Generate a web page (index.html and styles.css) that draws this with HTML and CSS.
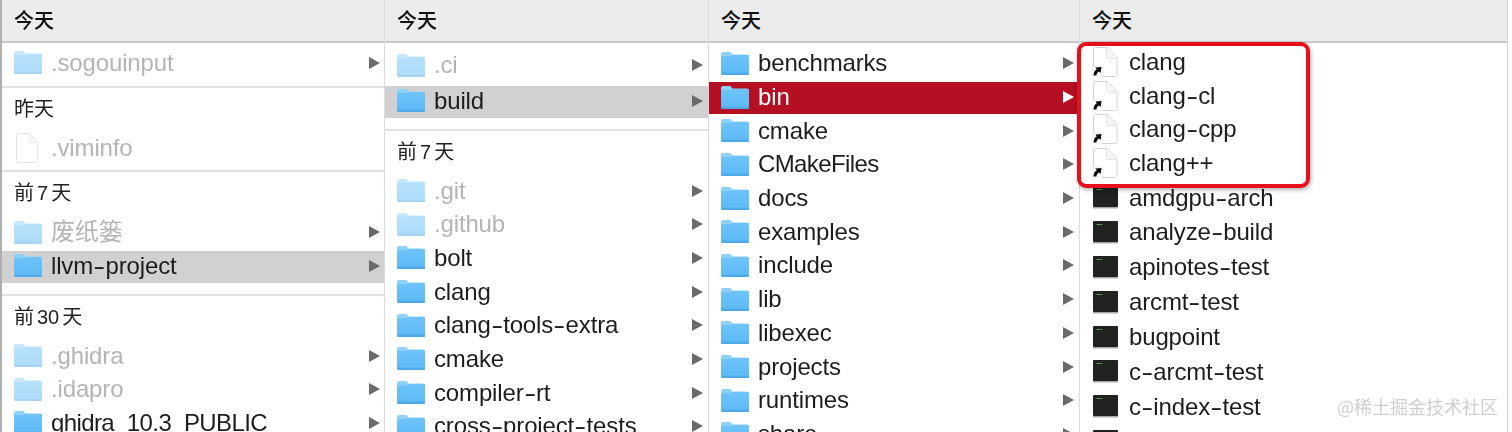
FILE: index.html
```html
<!DOCTYPE html>
<html lang="zh">
<head>
<meta charset="utf-8">
<title>Finder</title>
<link rel="stylesheet" href="styles.css">
</head>
<body>
<svg class="defs" width="0" height="0" aria-hidden="true">
  <defs>
    <linearGradient id="fg" x1="0" y1="0" x2="0" y2="1">
      <stop offset="0" stop-color="#6fc4f9"/>
      <stop offset="1" stop-color="#5cb9f7"/>
    </linearGradient>
    <symbol id="folder" viewBox="0 0 28 23">
      <path d="M0 2.200C0 1 .8 0 2 0h6.500c1 0 1.400.4 2 1.200l.8 1.300h14.500c1.200 0 2.200 1 2.200 2.200V8H0z" fill="#8ed2f9"/>
      <path d="M0 5.600c0-.9.6-1.600 1.500-1.600h7.800c.8 0 1.200-.3 1.700-.8l.3-.2h15c1.500 0 2.700.6 2.700 2v16c0 1.200-.9 2-2 2H2c-1.100 0-2-.8-2-2z" fill="url(#fg)"/>
      <path d="M0 21.200c0 1 .9 1.800 2 1.800h24c1.100 0 2-.8 2-1.800v-.4H0z" fill="#4fa9e6"/>
    </symbol>
    <symbol id="file" viewBox="0 0 24 30">
      <path d="M3 .5h10.500c1 0 1.700.4 2.400 1.100l5.500 5.900c.7.7 1.100 1.500 1.100 2.500V28c0 .8-.6 1.500-1.500 1.500H3c-.8 0-1.500-.7-1.500-1.500V2C1.500 1.200 2.200 .5 3 .5z" fill="#fff" stroke="#d8d8d8"/>
      <path d="M14 1v6.500c0 1.200.8 2 2 2h6.500" fill="#f6f6f6" stroke="#e4e4e4"/>
    </symbol>
    <symbol id="link" viewBox="0 0 26 30">
      <path d="M3 .5h11c1 0 1.700.4 2.400 1.100l7.500 8c.7.7 1.100 1.500 1.100 2.500V28c0 .8-.6 1.500-1.500 1.500H3c-.8 0-1.500-.7-1.500-1.500V2C1.500 1.200 2.200 .5 3 .5z" fill="#fff" stroke="#d2d2d2"/>
      <path d="M14.500 1v8.500c0 1.200.8 2 2 2h8" fill="#f6f6f6" stroke="#e2e2e2"/>
      <rect x="0" y="19" width="11" height="11" rx="1.500" fill="#fff" stroke="#dcdcdc" stroke-width=".6"/>
      <path d="M1.500 28.500c.1-3.200 1.300-5 3.300-6.200l-1.500-1.800 6.200-.5-.9 6.100-1.700-1.700c-1.400.9-2.200 2.200-2.500 4.100z" fill="#0b0b0b"/>
    </symbol>
    <symbol id="exec" viewBox="0 0 27 23">
      <rect x="1" y="0" width="25" height="21" rx="1" fill="#1f221f"/>
      <path d="M1 21h25v1.500H1z" fill="#a8a8a8"/>
      <path d="M4.500 3.500h6" stroke="#5fdc5f" stroke-width="1.200" stroke-dasharray="1 .5"/>
    </symbol>
  </defs>
</svg>

<main class="browser">
  <section class="col col-a">
    <header class="head">今天</header>
    <div class="group">
      <div class="row dim"><svg class="ico"><use href="#folder"/></svg><span class="name">.sogouinput</span><i class="arrow"></i></div>
    </div>
    <div class="group">
      <h2 class="label">昨天</h2>
      <div class="row dim"><svg class="ico doc"><use href="#file"/></svg><span class="name">.viminfo</span></div>
    </div>
    <div class="group wide">
      <h2 class="label">前<span class="num">7</span>天</h2>
      <div class="row dim"><svg class="ico"><use href="#folder"/></svg><span class="name">废纸篓</span><i class="arrow"></i></div>
      <div class="row sel"><svg class="ico"><use href="#folder"/></svg><span class="name">llvm<b class="hy">-</b>project</span><i class="arrow"></i></div>
    </div>
    <div class="group">
      <h2 class="label">前<span class="num">30</span>天</h2>
      <div class="row dim"><svg class="ico"><use href="#folder"/></svg><span class="name">.ghidra</span><i class="arrow"></i></div>
      <div class="row dim"><svg class="ico"><use href="#folder"/></svg><span class="name">.idapro</span><i class="arrow"></i></div>
      <div class="row"><svg class="ico"><use href="#folder"/></svg><span class="name tight">ghidra_10.3_PUBLIC</span><i class="arrow"></i></div>
    </div>
  </section>

  <section class="col col-b">
    <header class="head">今天</header>
    <div class="group wide">
      <div class="row dim lead"><svg class="ico"><use href="#folder"/></svg><span class="name">.ci</span><i class="arrow"></i></div>
      <div class="row sel"><svg class="ico"><use href="#folder"/></svg><span class="name">build</span><i class="arrow"></i></div>
    </div>
    <div class="group">
      <h2 class="label">前<span class="num">7</span>天</h2>
      <div class="row dim"><svg class="ico"><use href="#folder"/></svg><span class="name">.git</span><i class="arrow"></i></div>
      <div class="row dim"><svg class="ico"><use href="#folder"/></svg><span class="name">.github</span><i class="arrow"></i></div>
      <div class="row"><svg class="ico"><use href="#folder"/></svg><span class="name">bolt</span><i class="arrow"></i></div>
      <div class="row"><svg class="ico"><use href="#folder"/></svg><span class="name">clang</span><i class="arrow"></i></div>
      <div class="row"><svg class="ico"><use href="#folder"/></svg><span class="name">clang<b class="hy">-</b>tools<b class="hy">-</b>extra</span><i class="arrow"></i></div>
      <div class="row"><svg class="ico"><use href="#folder"/></svg><span class="name">cmake</span><i class="arrow"></i></div>
      <div class="row"><svg class="ico"><use href="#folder"/></svg><span class="name">compiler<b class="hy">-</b>rt</span><i class="arrow"></i></div>
      <div class="row"><svg class="ico"><use href="#folder"/></svg><span class="name">cross<b class="hy">-</b>project<b class="hy">-</b>tests</span><i class="arrow"></i></div>
    </div>
  </section>

  <section class="col col-c">
    <header class="head">今天</header>
    <div class="group">
      <div class="row"><svg class="ico"><use href="#folder"/></svg><span class="name">benchmarks</span><i class="arrow"></i></div>
      <div class="row active"><svg class="ico"><use href="#folder"/></svg><span class="name">bin</span><i class="arrow"></i></div>
      <div class="row"><svg class="ico"><use href="#folder"/></svg><span class="name">cmake</span><i class="arrow"></i></div>
      <div class="row"><svg class="ico"><use href="#folder"/></svg><span class="name tight">CMakeFiles</span><i class="arrow"></i></div>
      <div class="row"><svg class="ico"><use href="#folder"/></svg><span class="name">docs</span><i class="arrow"></i></div>
      <div class="row"><svg class="ico"><use href="#folder"/></svg><span class="name">examples</span><i class="arrow"></i></div>
      <div class="row"><svg class="ico"><use href="#folder"/></svg><span class="name">include</span><i class="arrow"></i></div>
      <div class="row"><svg class="ico"><use href="#folder"/></svg><span class="name">lib</span><i class="arrow"></i></div>
      <div class="row"><svg class="ico"><use href="#folder"/></svg><span class="name">libexec</span><i class="arrow"></i></div>
      <div class="row"><svg class="ico"><use href="#folder"/></svg><span class="name">projects</span><i class="arrow"></i></div>
      <div class="row"><svg class="ico"><use href="#folder"/></svg><span class="name">runtimes</span><i class="arrow"></i></div>
      <div class="row"><svg class="ico"><use href="#folder"/></svg><span class="name">share</span><i class="arrow"></i></div>
    </div>
  </section>

  <section class="col col-d">
    <header class="head">今天</header>
    <div class="group">
      <div class="row"><svg class="ico"><use href="#link"/></svg><span class="name">clang</span></div>
      <div class="row"><svg class="ico"><use href="#link"/></svg><span class="name">clang<b class="hy">-</b>cl</span></div>
      <div class="row"><svg class="ico"><use href="#link"/></svg><span class="name">clang<b class="hy">-</b>cpp</span></div>
      <div class="row before-tools"><svg class="ico"><use href="#link"/></svg><span class="name">clang++</span></div>
      <div class="row tool"><svg class="ico"><use href="#exec"/></svg><span class="name">amdgpu<b class="hy">-</b>arch</span></div>
      <div class="row tool"><svg class="ico"><use href="#exec"/></svg><span class="name">analyze<b class="hy">-</b>build</span></div>
      <div class="row tool"><svg class="ico"><use href="#exec"/></svg><span class="name">apinotes<b class="hy">-</b>test</span></div>
      <div class="row tool"><svg class="ico"><use href="#exec"/></svg><span class="name">arcmt<b class="hy">-</b>test</span></div>
      <div class="row tool"><svg class="ico"><use href="#exec"/></svg><span class="name">bugpoint</span></div>
      <div class="row tool"><svg class="ico"><use href="#exec"/></svg><span class="name">c<b class="hy">-</b>arcmt<b class="hy">-</b>test</span></div>
      <div class="row tool"><svg class="ico"><use href="#exec"/></svg><span class="name">c<b class="hy">-</b>index<b class="hy">-</b>test</span></div>
      <div class="row tool"><svg class="ico"><use href="#exec"/></svg><span class="name">clang<b class="hy">-</b>15</span></div>
    </div>
  </section>
</main>

<div class="callout"></div>
<div class="mark">@稀土掘金技术社区</div>
</body>
</html>
```

FILE: styles.css
```css
* { box-sizing: border-box; }

html, body {
  margin: 0;
  height: 432px;
  overflow: hidden;
  background: #fff;
}

body {
  position: relative;
  font-family: "Liberation Sans", "Noto Sans CJK SC", sans-serif;
  color: #1d1d1d;
}

.defs { position: absolute; }

.browser {
  display: flex;
  width: 1508px;
  height: 432px;
  border-left: 2px solid #b0b0b0;
  border-right: 1px solid #d6d6d6;
  filter: blur(.35px);
}

.col {
  flex: none;
  height: 432px;
  overflow: hidden;
  border-right: 1px solid #dcdcdc;
}

.col-a { width: 383px; }
.col-b { width: 324px; }
.col-c { width: 371px; }
.col-d { flex: 1; border-right: 0; }

.head {
  height: 43px;
  padding: 7px 0 0 12px;
  background: #ececec;
  border-bottom: 2px solid #c9c9c9;
  font-size: 20px;
  line-height: 28px;
  font-weight: 500;
  color: #111;
}

.group {
  padding-bottom: 4px;
  border-bottom: 2px solid #e2e2e2;
}

.group.wide { padding-bottom: 9px; }
.group:last-child { border-bottom: 0; }

.col-a .head + .group { padding-top: 5px; }
.col-b .head + .group { padding-top: 7.5px; }
.col-c .head + .group { padding-top: 5.5px; }
.col-d .head + .group { padding-top: 4px; }

.label {
  margin: 0;
  height: 45px;
  padding: 7px 0 0 12px;
  font-size: 20px;
  line-height: 28px;
  font-weight: 400;
  color: #222;
}

.num {
  padding: 0 3px;
  font-family: "Liberation Sans", sans-serif;
}

.row {
  display: flex;
  align-items: center;
  height: 31.7px;
  margin-bottom: 2px;
  padding: 0 4px 2px 12px;
  font-size: 24px;
  letter-spacing: -.15px;
}

.row.lead { margin-bottom: 3.8px; }
.row.before-tools { margin-bottom: 3px; }
.row.tool { margin-bottom: 3.2px; }

.ico {
  flex: none;
  width: 28px;
  height: 23px;
  margin-right: 9px;
}

.ico.doc {
  width: 24px;
  height: 30px;
  margin: 0 12px 0 1px;
}

.name {
  flex: 1;
  white-space: nowrap;
  line-height: 30px;
}

.name.tight { letter-spacing: -.6px; }

.hy {
  display: inline-block;
  width: 12.5px;
  font-weight: 400;
  text-align: center;
  transform: scaleX(1.5);
}

.arrow {
  flex: none;
  width: 0;
  height: 0;
  border-style: solid;
  border-width: 6.5px 0 6.5px 11px;
  border-color: transparent transparent transparent #6a6a6a;
}

.col-b .row, .col-c .row { padding-right: 5px; }

.dim .name { color: #b4b4b4; }
.dim .ico { opacity: .5; }
.dim .ico.doc { opacity: .75; }

.sel { background: #d1d1d1; }

.active {
  background: #b40f22;
  color: #fff;
}
.active .arrow { border-left-color: #fff; }

.col-d .ico {
  width: 26px;
  height: 30px;
  margin-right: 11px;
}
.col-d .tool .ico { width: 27px; height: 23px; margin-right: 10px; }

.callout {
  position: absolute;
  left: 1077px;
  top: 42px;
  width: 233px;
  height: 146px;
  border: 4px solid #e60f1b;
  border-radius: 9px;
  box-shadow: 1px 2px 4px rgba(0, 0, 0, .3);
}

.mark {
  position: absolute;
  left: 1337px;
  top: 392px;
  font-family: "Noto Sans CJK SC", sans-serif;
  font-size: 18px;
  line-height: 28px;
  color: #cfcfcf;
  white-space: nowrap;
}
```
